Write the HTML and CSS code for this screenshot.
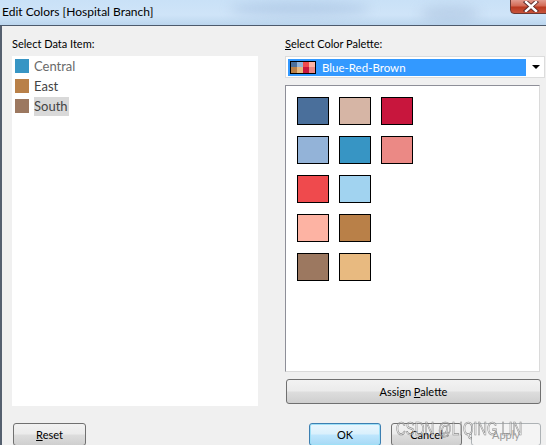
FILE: index.html
```html
<!DOCTYPE html>
<html>
<head>
<meta charset="utf-8">
<link rel="stylesheet" href="styles.css">
</head>
<body>
<div class="window">
  <div class="titlebar">
    <span class="title">Edit Colors [Hospital Branch]</span>
    <div class="blur b1"></div>
    <div class="blur b2"></div>
    <div class="close"><svg width="16" height="11" viewBox="0 0 16 11"><path d="M3 1 L13 10 M13 1 L3 10" stroke="#5a2a2a" stroke-width="4.2" stroke-linecap="square"/><path d="M3 1 L13 10 M13 1 L3 10" stroke="#ffffff" stroke-width="2.4" stroke-linecap="square"/></svg></div>
  </div>
  <div class="body">
    <div class="main">
      <div class="col left">
        <div class="label">Select Data Item:</div>
        <div class="listbox">
          <div class="item"><span class="sw" style="background:#3795c4"></span><span class="txt central">Central</span></div>
          <div class="item"><span class="sw" style="background:#b98048"></span><span class="txt">East</span></div>
          <div class="item"><span class="sw" style="background:#9c7860"></span><span class="txt sel">South</span></div>
        </div>
      </div>
      <div class="col right">
        <div class="label"><u>S</u>elect Color Palette:</div>
        <div class="combo">
          <div class="combo-sel">
            <span class="picon">
              <i style="background:#4a6f9b"></i><i style="background:#93b3d8"></i><i style="background:#ef4a4d"></i><i style="background:#fdb3a3"></i>
              <i style="background:#b98048"></i><i style="background:#e8ba80"></i><i style="background:#c8163d"></i><i style="background:#eb8985"></i>
            </span>
            <span class="combo-txt">Blue-Red-Brown</span>
          </div>
          <div class="arrow"></div>
        </div>
        <div class="palette">
          <div class="grid">
            <span class="cs" style="background:#4a6f9b"></span>
            <span class="cs" style="background:#d6b5a5"></span>
            <span class="cs" style="background:#c8163d"></span>
            <span class="cs" style="background:#93b3d8"></span>
            <span class="cs" style="background:#3795c4"></span>
            <span class="cs" style="background:#eb8985"></span>
            <span class="cs" style="background:#ef4a4d"></span>
            <span class="cs" style="background:#a1d3f0"></span>
            <span class="empty"></span>
            <span class="cs" style="background:#fdb3a3"></span>
            <span class="cs" style="background:#b98048"></span>
            <span class="empty"></span>
            <span class="cs" style="background:#9c7860"></span>
            <span class="cs" style="background:#e8ba80"></span>
          </div>
        </div>
        <div class="btn assign"><span>Assign <u>P</u>alette</span></div>
      </div>
    </div>
    <div class="footer">
      <div class="btn reset"><span><u>R</u>eset</span></div>
      <div class="spacer"></div>
      <div class="btn ok"><span>OK</span></div>
      <div class="btn cancel"><span>Cancel</span></div>
      <div class="btn apply"><span>Apply</span></div>
    </div>
  </div>
  <div class="watermark">CSDN @LIQING LIN</div>
</div>
</body>
</html>
```

FILE: styles.css
```css
html, body {
  margin: 0;
  padding: 0;
}
body {
  width: 546px;
  height: 445px;
  overflow: hidden;
  background: #f0f0f0;
  font-family: Lato, "Noto Sans", sans-serif;
  font-size: 11px;
  color: #000;
}
.window {
  position: relative;
  width: 546px;
  height: 445px;
  display: flex;
  flex-direction: column;
}
.titlebar {
  position: relative;
  height: 25px;
  flex: none;
  background: linear-gradient(180deg, #c9e1f7 0%, #cfe4f8 60%, #bcd6ee 100%);
  border-bottom: 1px solid #4d5a6c;
  overflow: hidden;
}
.blur {
  position: absolute;
  border-radius: 50%;
  filter: blur(6px);
}
.b1 { left: 230px; top: 2px; width: 140px; height: 14px; background: rgba(150,180,215,0.45); }
.b2 { left: 420px; top: 6px; width: 60px; height: 16px; background: rgba(160,185,215,0.45); }
.title {
  position: relative;
  z-index: 1;
  display: block;
  padding-left: 2px;
  line-height: 23px;
  font-size: 12px;
  color: #000;
}
.close {
  position: absolute;
  right: -8px;
  top: -1px;
  width: 44px;
  height: 15px;
  border: 1px solid #6b3a35;
  border-radius: 0 0 0 4px;
  background: linear-gradient(180deg, #e29b8e 0%, #d36a55 45%, #b9381f 55%, #c8543c 100%);
  display: flex;
  align-items: center;
  padding-left: 12px;
  box-sizing: border-box;
}
.body {
  flex: 1;
  border-left: 2px solid #55606f;
  display: flex;
  flex-direction: column;
}
.main {
  display: flex;
  gap: 27px;
  padding: 10px 0 0 10px;
}
.col {
  display: flex;
  flex-direction: column;
}
.left { width: 246px; }
.right { width: 256px; }
.label {
  height: 16px;
  line-height: 16px;
  margin-bottom: 4px;
}
.listbox {
  height: 350px;
  background: #fff;
  box-sizing: border-box;
}
.item {
  display: flex;
  align-items: center;
  height: 20px;
  padding-left: 3px;
}
.sw {
  width: 14px;
  height: 14px;
  margin-right: 5px;
  flex: none;
}
.txt {
  font-size: 13px;
  color: #444;
  line-height: 19px;
  padding-right: 1px;
}
.txt.central { color: #6a6a6a; }
.txt.sel { background: #d9d9d9; }
.combo {
  width: 260px;
  height: 22px;
  box-sizing: border-box;
  border: 1px solid #dcdcdc;
  background: #fff;
  display: flex;
  align-items: center;
  padding: 2px 0 2px 2px;
}
.combo-sel {
  width: 238px;
  height: 17px;
  background: #3399ff;
  display: flex;
  align-items: center;
  color: #fff;
  font-size: 11.5px;
}
.picon {
  margin-left: 2px;
  width: 26px;
  height: 13px;
  box-sizing: border-box;
  border: 1px solid #000;
  display: grid;
  grid-template-columns: repeat(4, 1fr);
  grid-template-rows: repeat(2, 1fr);
  margin-right: 6px;
}
.picon i { display: block; }
.arrow {
  margin-left: 6px;
  width: 0;
  height: 0;
  border-left: 4px solid transparent;
  border-right: 4px solid transparent;
  border-top: 4px solid #000;
}
.palette {
  margin-top: 7px;
  width: 255px;
  height: 287px;
  box-sizing: border-box;
  border: 1px solid #8e8f98;
  border-right-color: #dadada;
  border-bottom-color: #dadada;
  background: #fff;
  padding: 11px 0 0 11px;
}
.grid {
  display: grid;
  grid-template-columns: repeat(3, 32px);
  grid-auto-rows: 28px;
  column-gap: 10px;
  row-gap: 11px;
}
.cs {
  box-sizing: border-box;
  border: 1px solid #000;
}
.btn {
  box-sizing: border-box;
  border: 1px solid #707070;
  border-radius: 3px;
  background: linear-gradient(180deg, #f2f2f2 0%, #ebebeb 48%, #dddddd 52%, #cfcfcf 100%);
  display: flex;
  align-items: center;
  justify-content: center;
  font-size: 11px;
  color: #000;
  white-space: nowrap;
}
.assign {
  margin-top: 7px;
  margin-left: 1px;
  width: 255px;
  height: 25px;
}
.footer {
  display: flex;
  padding: 17px 0 0 11px;
}
.footer .btn { height: 23px; }
.reset { width: 73px; }
.spacer { flex: 1; }
.ok {
  width: 72px;
  border-color: #3c7fb1;
  background: linear-gradient(180deg, #eaf6fd 0%, #d9f0fc 48%, #bee6fd 52%, #a7d9f5 100%);
  box-shadow: inset 0 0 0 1px #9fe0f7;
}
.cancel { width: 71px; margin-left: 10px; }
.apply {
  width: 70px;
  margin-left: 9px;
  margin-right: 5px;
  color: #9a9a9a;
  border-color: #adb2b5;
  background: #f4f4f4;
}
.watermark {
  position: absolute;
  left: 396px;
  top: 418px;
  white-space: nowrap;
  font-family: "Liberation Sans", sans-serif;
  font-size: 19px;
  line-height: 22px;
  transform: scaleX(0.71);
  transform-origin: 0 0;
  color: rgba(255,255,255,0.4);
  -webkit-text-stroke: 0.7px rgba(120,120,120,0.85);
  pointer-events: none;
}
```
